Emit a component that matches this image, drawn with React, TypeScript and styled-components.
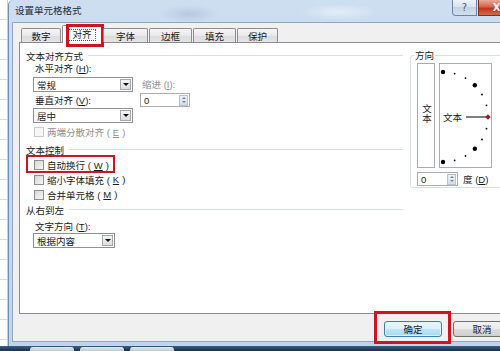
import React from 'react';
import styled, { createGlobalStyle, css } from 'styled-components';

const GlobalStyle = createGlobalStyle`
  html, body {
    margin: 0;
    padding: 0;
    background: #fff;
  }
  body {
    font-family: "Liberation Sans", "Noto Sans CJK SC", sans-serif;
    font-size: 9.5px;
    color: #1b1b1b;
  }
  * { box-sizing: border-box; }
`;

const Screen = styled.div`
  width: 500px;
  height: 351px;
  overflow: hidden;
  display: flex;
  flex-direction: column;
`;

const Desktop = styled.div`
  height: 346px;
  display: flex;
`;

const SheetStrip = styled.div`
  flex: 0 0 8px;
  background: #fff repeating-linear-gradient(to bottom, transparent 0 19px, #d3d9e3 19px 20px);
  border-right: 1px solid #c4d0de;
`;

const Window = styled.div`
  flex: 0 0 515px;
  display: flex;
  flex-direction: column;
  padding: 0 0 4px 3px;
  border-left: 1px solid #6f8db3;
  border-radius: 5px 0 0 0;
  background:
    radial-gradient(ellipse 30px 9px at 180px 14px, rgba(110, 130, 160, 0.22), transparent),
    radial-gradient(ellipse 40px 8px at 330px 12px, rgba(255, 255, 255, 0.45), transparent),
    linear-gradient(#cddef1, #c0d4eb);
`;

const TitleBar = styled.div`
  height: 22px;
  display: flex;
  justify-content: space-between;
`;

const Title = styled.div`
  padding-left: 3px;
  line-height: 22px;
  color: #1e2a38;
`;

const CaptionButtons = styled.div`
  display: flex;
  gap: 1px;
  margin-right: 8px;
  height: 16px;
`;

const CaptionButton = styled.div<{ $close?: boolean }>`
  width: ${p => (p.$close ? 37 : 25)}px;
  height: 16px;
  display: flex;
  align-items: center;
  justify-content: center;
  border: 1px solid #6a84a6;
  border-top: none;
  border-radius: ${p => (p.$close ? '0 0 4px 0' : '0 0 0 4px')};
  font-family: "DejaVu Sans", sans-serif;
  font-size: 10px;
  font-weight: bold;
  ${p =>
    p.$close
      ? css`
          background: linear-gradient(#e9a899, #d3654f 45%, #c0341c 55%, #d26a4f);
          border-color: #8a2a1c;
          color: #fff;
        `
      : css`
          background: linear-gradient(#eef3f9, #d6e1ee 50%, #c4d3e5 50%, #d3dfec);
          color: #4a5a70;
          font-weight: normal;
        `}
`;

const Client = styled.div`
  flex: 1;
  display: flex;
  flex-direction: column;
  background: #f0f0f0;
  border: 1px solid #90a7c4;
  padding: 2px 6px 0 6px;
`;

const TabRow = styled.div`
  height: 18px;
  display: flex;
  align-items: flex-end;
  gap: 1px;
  padding-left: 2px;
  margin-bottom: -1px;
  position: relative;
  z-index: 1;
`;

const Tab = styled.div<{ $w: number; $active?: boolean }>`
  position: relative;
  width: ${p => p.$w}px;
  display: flex;
  align-items: center;
  justify-content: center;
  border: 1px solid #8c8e94;
  border-bottom: none;
  border-radius: 2px 2px 0 0;
  ${p =>
    p.$active
      ? css`
          height: 18px;
          background: #fff;
          &::after {
            content: '';
            position: absolute;
            top: -2px;
            left: 3px;
            right: -3px;
            bottom: -4px;
            border: 3px solid #cf1420;
          }
        `
      : css`
          height: 14px;
          margin-bottom: 1px;
          background: linear-gradient(#f6f6f6, #e9e9e9 50%, #dcdcdc 50%, #e3e3e3);
        `}
`;

const FocusText = styled.span`
  border: 1px dotted #555;
  padding: 0 3px;
  line-height: 10px;
`;

const Panel = styled.div`
  height: 272px;
  display: flex;
  gap: 7px;
  padding-left: 6px;
  background: #fff;
  border: 1px solid #898c95;
`;

const LeftCol = styled.div`
  flex: 0 0 377px;
  display: flex;
  flex-direction: column;
`;

const Header = styled.div<{ $mt: number }>`
  height: 13px;
  margin-top: ${p => p.$mt}px;
  display: flex;
  align-items: center;
  gap: 5px;
  &::after {
    content: '';
    flex: 1;
    height: 1px;
    background: #d5dfe5;
  }
`;

const AlignGrid = styled.div`
  margin-left: 7px;
  display: grid;
  grid-template-columns: 100px 50px;
  grid-template-rows: 15px 15px 16px 15px;
  column-gap: 7px;
  align-items: center;
`;

const Label = styled.div<{ $muted?: boolean; $mt?: number; $ml?: number }>`
  padding-left: 2px;
  line-height: 13px;
  margin-top: ${p => p.$mt ?? 0}px;
  margin-left: ${p => p.$ml ?? 0}px;
  color: ${p => (p.$muted ? '#8f8f8f' : 'inherit')};
  white-space: nowrap;
`;

const TopLabel = styled(Label)`
  align-self: start;
`;

const Select = styled.div<{ $w: number; $ml?: number }>`
  width: ${p => p.$w}px;
  height: 15px;
  margin-left: ${p => p.$ml ?? 0}px;
  display: flex;
  align-items: center;
  padding: 0 1px 0 3px;
  border: 1px solid #8e9196;
  background: #fff;
`;

const DropButton = styled.span`
  margin-left: auto;
  width: 11px;
  height: 11px;
  display: flex;
  align-items: center;
  justify-content: center;
  border: 1px solid #a3a6ab;
  background: linear-gradient(#f4f4f4, #dedede);
  &::before {
    content: '';
    border-left: 3px solid transparent;
    border-right: 3px solid transparent;
    border-top: 3px solid #111;
  }
`;

const Spin = styled.div<{ $w: number }>`
  width: ${p => p.$w}px;
  height: 14px;
  display: flex;
  align-items: center;
  padding: 0 1px 0 3px;
  border: 1px solid #abadb3;
  background: #fff;
`;

const SpinButton = styled.span`
  margin-left: auto;
  width: 9px;
  height: 11px;
  display: flex;
  flex-direction: column;
  align-items: center;
  justify-content: space-evenly;
  background: linear-gradient(#eef2f7, #d4dde8);
  border: 1px solid #b9c3cf;
  &::before,
  &::after {
    content: '';
    border-left: 2px solid transparent;
    border-right: 2px solid transparent;
  }
  &::before { border-bottom: 2px solid #7a8594; }
  &::after { border-top: 2px solid #7a8594; }
`;

const CheckRow = styled.div<{ $h: number; $mt?: number; $marked?: boolean; $disabled?: boolean }>`
  position: relative;
  align-self: flex-start;
  height: ${p => p.$h}px;
  margin-top: ${p => p.$mt ?? 0}px;
  display: flex;
  align-items: center;
  gap: 3px;
  padding-left: 8px;
  color: ${p => (p.$disabled ? '#8f8f8f' : 'inherit')};
  ${p =>
    p.$marked &&
    css`
      &::after {
        content: '';
        position: absolute;
        top: -3px;
        bottom: -1px;
        left: 0;
        right: -6px;
        border: 2px solid #cf1420;
      }
    `}
`;

const Box = styled.span<{ $disabled?: boolean }>`
  width: 10px;
  height: 10px;
  border: 1px solid ${p => (p.$disabled ? '#c9c9c9' : '#8e8f8f')};
  background: ${p =>
    p.$disabled ? '#f6f6f6' : 'linear-gradient(135deg, #d6d6d6, #f7f7f7)'};
`;

const DirGroup = styled.div`
  position: relative;
  flex: 0 0 92px;
  height: 133px;
  margin-top: 12px;
  padding: 7px 0 0 6px;
  border: 1px solid #d5dfe5;
  border-radius: 3px;
`;

const Legend = styled.span`
  position: absolute;
  top: -7px;
  left: 3px;
  padding: 0 1px;
  line-height: 13px;
  background: #fff;
`;

const DialRow = styled.div`
  display: flex;
  gap: 4px;
`;

const VertBox = styled.div`
  width: 18px;
  height: 105px;
  display: flex;
  align-items: center;
  justify-content: center;
  padding-bottom: 4px;
  border: 1px solid #a7adb5;
  writing-mode: vertical-rl;
  text-orientation: upright;
  line-height: 10px;
`;

const DialBox = styled.div`
  width: 53px;
  height: 105px;
  border: 1px solid #a7adb5;
  svg { display: block; }
`;

const AngleRow = styled.div`
  margin-top: 4px;
  display: flex;
  align-items: center;
  gap: 5px;
`;

const Footer = styled.div`
  flex: 1;
  display: flex;
  justify-content: flex-end;
  align-items: flex-start;
  gap: 11px;
  padding: 7px 5px 0 0;
`;

const Button = styled.div<{ $default?: boolean }>`
  position: relative;
  width: 58px;
  height: 16px;
  display: flex;
  align-items: center;
  justify-content: center;
  border: 1px solid #707070;
  border-radius: 3px;
  background: linear-gradient(#f2f2f2, #ebebeb 50%, #dddddd 50%, #cfcfcf);
  ${p =>
    p.$default &&
    css`
      border-color: #3c7fb1;
      background: linear-gradient(#eaf6fd, #d9f0fc 50%, #bee6fd 50%, #a7d9f5);
      box-shadow: inset 0 0 0 1px #dff3fe;
      &::after {
        content: '';
        position: absolute;
        top: -11px;
        bottom: -8px;
        left: -11px;
        right: -10px;
        border: 3px solid #cf1420;
      }
    `}
`;

const Taskbar = styled.div`
  height: 5px;
  display: flex;
  gap: 6px;
  padding: 1px 0 0 30px;
  background: linear-gradient(#3b5f86, #1a2e48);
`;

const TaskButton = styled.div`
  width: 44px;
  border-radius: 3px 3px 0 0;
  background: linear-gradient(#e7ebf0, #bfc8d3);
`;

const Mn = styled.u`
  text-decoration: underline;
`;

const tabs = [
  { label: '数字', w: 40 },
  { label: '对齐', w: 40, active: true },
  { label: '字体', w: 45 },
  { label: '边框', w: 43 },
  { label: '填充', w: 43 },
  { label: '保护', w: 41 },
];

const Dial: React.FC = () => {
  const cx = 3;
  const cy = 53;
  const r = 45;
  const angles = [90, 75, 60, 45, 30, 15, -15, -30, -45, -60, -75, -90];
  return (
    <svg width="51" height="103" viewBox="0 0 51 103">
      {angles.map(a => {
        const rad = (a * Math.PI) / 180;
        const big = Math.abs(a) === 90 || Math.abs(a) === 45;
        return (
          <circle
            key={a}
            cx={cx + r * Math.cos(rad)}
            cy={cy - r * Math.sin(rad)}
            r={big ? 2.2 : 0.9}
            fill="#000"
          />
        );
      })}
      <text x="3" y="57" fontSize="9.5" fontFamily="Noto Sans CJK SC, sans-serif" fill="#1b1b1b">
        文本
      </text>
      <line x1="26" y1="53" x2="46" y2="53" stroke="#000" strokeWidth="1" />
      <polygon points="48,50.3 50.7,53 48,55.7 45.3,53" fill="#a3191f" />
    </svg>
  );
};

const App: React.FC = () => {
  return (
    <>
      <GlobalStyle />
      <Screen>
        <Desktop>
          <SheetStrip />
          <Window>
            <TitleBar>
              <Title>设置单元格格式</Title>
              <CaptionButtons>
                <CaptionButton>?</CaptionButton>
                <CaptionButton $close>X</CaptionButton>
              </CaptionButtons>
            </TitleBar>
            <Client>
              <TabRow>
                {tabs.map(t => (
                  <Tab key={t.label} $w={t.w} $active={t.active}>
                    {t.active ? <FocusText>{t.label}</FocusText> : t.label}
                  </Tab>
                ))}
              </TabRow>
              <Panel>
                <LeftCol>
                  <Header $mt={6}>文本对齐方式</Header>
                  <AlignGrid>
                    <TopLabel>
                      水平对齐 (<Mn>H</Mn>):
                    </TopLabel>
                    <span />
                    <Select $w={100}>
                      常规
                      <DropButton />
                    </Select>
                    <Label $muted>
                      缩进 (<Mn>I</Mn>):
                    </Label>
                    <Label>
                      垂直对齐 (<Mn>V</Mn>):
                    </Label>
                    <Spin $w={50}>
                      0
                      <SpinButton />
                    </Spin>
                    <Select $w={100}>
                      居中
                      <DropButton />
                    </Select>
                    <span />
                  </AlignGrid>
                  <CheckRow $h={14} $mt={2} $disabled>
                    <Box $disabled />
                    两端分散对齐 (<Mn>E</Mn>)
                  </CheckRow>
                  <Header $mt={4}>文本控制</Header>
                  <CheckRow $h={14} $mt={2} $marked>
                    <Box />
                    自动换行 (<Mn>W</Mn>)
                  </CheckRow>
                  <CheckRow $h={15}>
                    <Box />
                    缩小字体填充 (<Mn>K</Mn>)
                  </CheckRow>
                  <CheckRow $h={15}>
                    <Box />
                    合并单元格 (<Mn>M</Mn>)
                  </CheckRow>
                  <Header $mt={1}>从右到左</Header>
                  <Label $mt={4} $ml={7}>
                    文字方向 (<Mn>T</Mn>):
                  </Label>
                  <Select $w={82} $ml={7}>
                    根据内容
                    <DropButton />
                  </Select>
                </LeftCol>
                <DirGroup>
                  <Legend>方向</Legend>
                  <DialRow>
                    <VertBox>文本</VertBox>
                    <DialBox>
                      <Dial />
                    </DialBox>
                  </DialRow>
                  <AngleRow>
                    <Spin $w={41}>
                      0
                      <SpinButton />
                    </Spin>
                    <span>
                      度 (<Mn>D</Mn>)
                    </span>
                  </AngleRow>
                </DirGroup>
              </Panel>
              <Footer>
                <Button $default>确定</Button>
                <Button>取消</Button>
              </Footer>
            </Client>
          </Window>
        </Desktop>
        <Taskbar>
          <TaskButton />
          <TaskButton />
          <TaskButton />
        </Taskbar>
      </Screen>
    </>
  );
};

export default App;
